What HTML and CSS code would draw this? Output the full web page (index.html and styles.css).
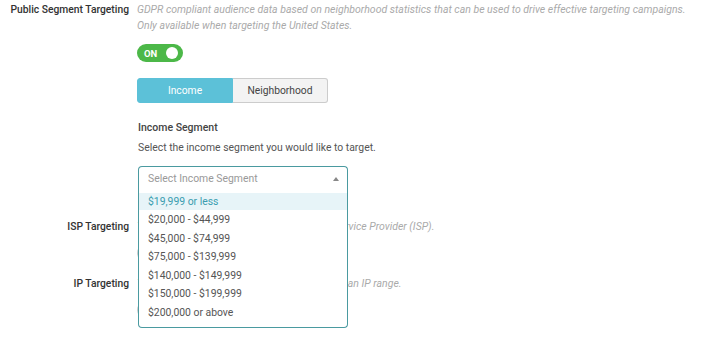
FILE: index.html
```html
<!DOCTYPE html>
<html>
<head>
<meta charset="utf-8">
<link rel="stylesheet" href="styles.css">
</head>
<body>
<div class="form">
  <div class="row row-public">
    <div class="label">Public Segment Targeting</div>
    <div class="content">
      <p class="desc">GDPR compliant audience data based on neighborhood statistics that can be used to drive effective targeting campaigns.<br>Only available when targeting the United States.</p>
      <div class="toggle on"><span class="toggle-text">ON</span><span class="knob"></span></div>
      <div class="segmented">
        <button class="seg active">Income</button>
        <button class="seg">Neighborhood</button>
      </div>
      <div class="field-title">Income Segment</div>
      <div class="field-help">Select the income segment you would like to target.</div>
      <div class="select open">
        <div class="select-head">
          <span class="placeholder">Select Income Segment</span>
          <span class="arrow"></span>
        </div>
        <ul class="menu">
          <li class="hl">$19,999 or less</li>
          <li>$20,000 - $44,999</li>
          <li>$45,000 - $74,999</li>
          <li>$75,000 - $139,999</li>
          <li>$140,000 - $149,999</li>
          <li>$150,000 - $199,999</li>
          <li>$200,000 or above</li>
        </ul>
      </div>
    </div>
  </div>
  <div class="row row-isp">
    <div class="label">ISP Targeting</div>
    <div class="content">
      <p class="desc single">Target users based upon their own Internet Service Provider (ISP).</p>
      <div class="toggle off"><span class="knob"></span><span class="toggle-text">OFF</span></div>
    </div>
  </div>
  <div class="row row-ip">
    <div class="label">IP Targeting</div>
    <div class="content">
      <p class="desc single">Target users by their own IP address, or within an IP range.</p>
      <div class="toggle off"><span class="knob"></span><span class="toggle-text">OFF</span></div>
    </div>
  </div>
</div>
</body>
</html>
```

FILE: styles.css
```css
* { box-sizing: border-box; }
html, body { margin: 0; padding: 0; background: #fff; }
body {
  font-family: Roboto, "Liberation Sans", Arial, sans-serif;
  font-size: 10px;
  color: #444;
}
.form { padding-top: 2px; padding-bottom: 18px; }
.row {
  display: grid;
  grid-template-columns: 129px 1fr;
  column-gap: 8px;
}
.label {
  text-align: right;
  font-weight: 500;
  font-size: 10.3px;
  line-height: 16px;
  color: #333;
}
.desc {
  margin: 0;
  font-style: italic;
  font-size: 10.5px;
  line-height: 16px;
  color: #aaa;
}
.toggle {
  position: relative;
  width: 46px;
  height: 18px;
  border-radius: 9px;
  display: flex;
  align-items: center;
  margin-top: 10px;
}
.toggle.on { background: #4cb848; }
.toggle.off { background: #ccc; }
.toggle-text {
  color: #fff;
  font-weight: 700;
  font-size: 9.5px;
  padding-left: 7px;
}
.toggle .knob {
  position: absolute;
  top: 3px;
  right: 5px;
  width: 12px;
  height: 12px;
  border-radius: 50%;
  background: #fff;
}
.toggle.off .knob { left: 3px; right: auto; }
.toggle.off .toggle-text { padding-left: 20px; }
.segmented {
  display: flex;
  margin-top: 16px;
  width: 191px;
  height: 25px;
}
.seg {
  font-family: inherit;
  font-size: 10.3px;
  border: 1px solid #ccc;
  background: #f3f3f3;
  color: #444;
  padding: 0;
  margin: 0;
  height: 25px;
}
.seg:first-child {
  width: 96px;
  border-radius: 3px 0 0 3px;
}
.seg:last-child {
  flex: 1;
  border-left: none;
  border-radius: 0 3px 3px 0;
}
.seg.active {
  background: #5cc1d8;
  border-color: #5cc1d8;
  color: #fff;
}
.field-title {
  margin-top: 17px;
  margin-left: 1px;
  font-weight: 500;
  font-size: 10.5px;
  line-height: 16px;
  color: #444;
}
.field-help {
  margin-top: 4px;
  margin-left: 1px;
  font-size: 10.4px;
  line-height: 16px;
  color: #555;
}
.select {
  position: relative;
  margin-top: 10px;
  margin-left: 1px;
  width: 210px;
  z-index: 5;
}
.select-head {
  height: 27px;
  border: 1px solid #4a9aa0;
  border-bottom: none;
  border-radius: 4px 4px 0 0;
  background: #fff;
  display: flex;
  align-items: flex-start;
  justify-content: space-between;
  padding: 5px 8px 0 9px;
}
.placeholder { color: #999; font-size: 10.4px; line-height: 14px; }
.arrow {
  margin-top: 5px;
  width: 0;
  height: 0;
  border-left: 3.5px solid transparent;
  border-right: 3.5px solid transparent;
  border-bottom: 4px solid #888;
}
.menu {
  position: absolute;
  top: 27px;
  left: 0;
  width: 210px;
  margin: 0;
  padding: 0 0 6px 0;
  list-style: none;
  background: #fff;
  border: 1px solid #4a9aa0;
  border-top: none;
  border-radius: 0 0 4px 4px;
}
.menu li {
  height: 18.5px;
  line-height: 19px;
  padding-left: 9px;
  font-size: 10.4px;
  color: #555;
}
.menu li.hl {
  background: #e7f4f8;
  color: #3a9db0;
  height: 17px;
  line-height: 17px;
}
.row-isp { margin-top: 26px; }
.row-isp .toggle { margin-top: 9px; }
.row-ip { margin-top: 14px; }
.row-ip .toggle { margin-top: 9px; }
```
